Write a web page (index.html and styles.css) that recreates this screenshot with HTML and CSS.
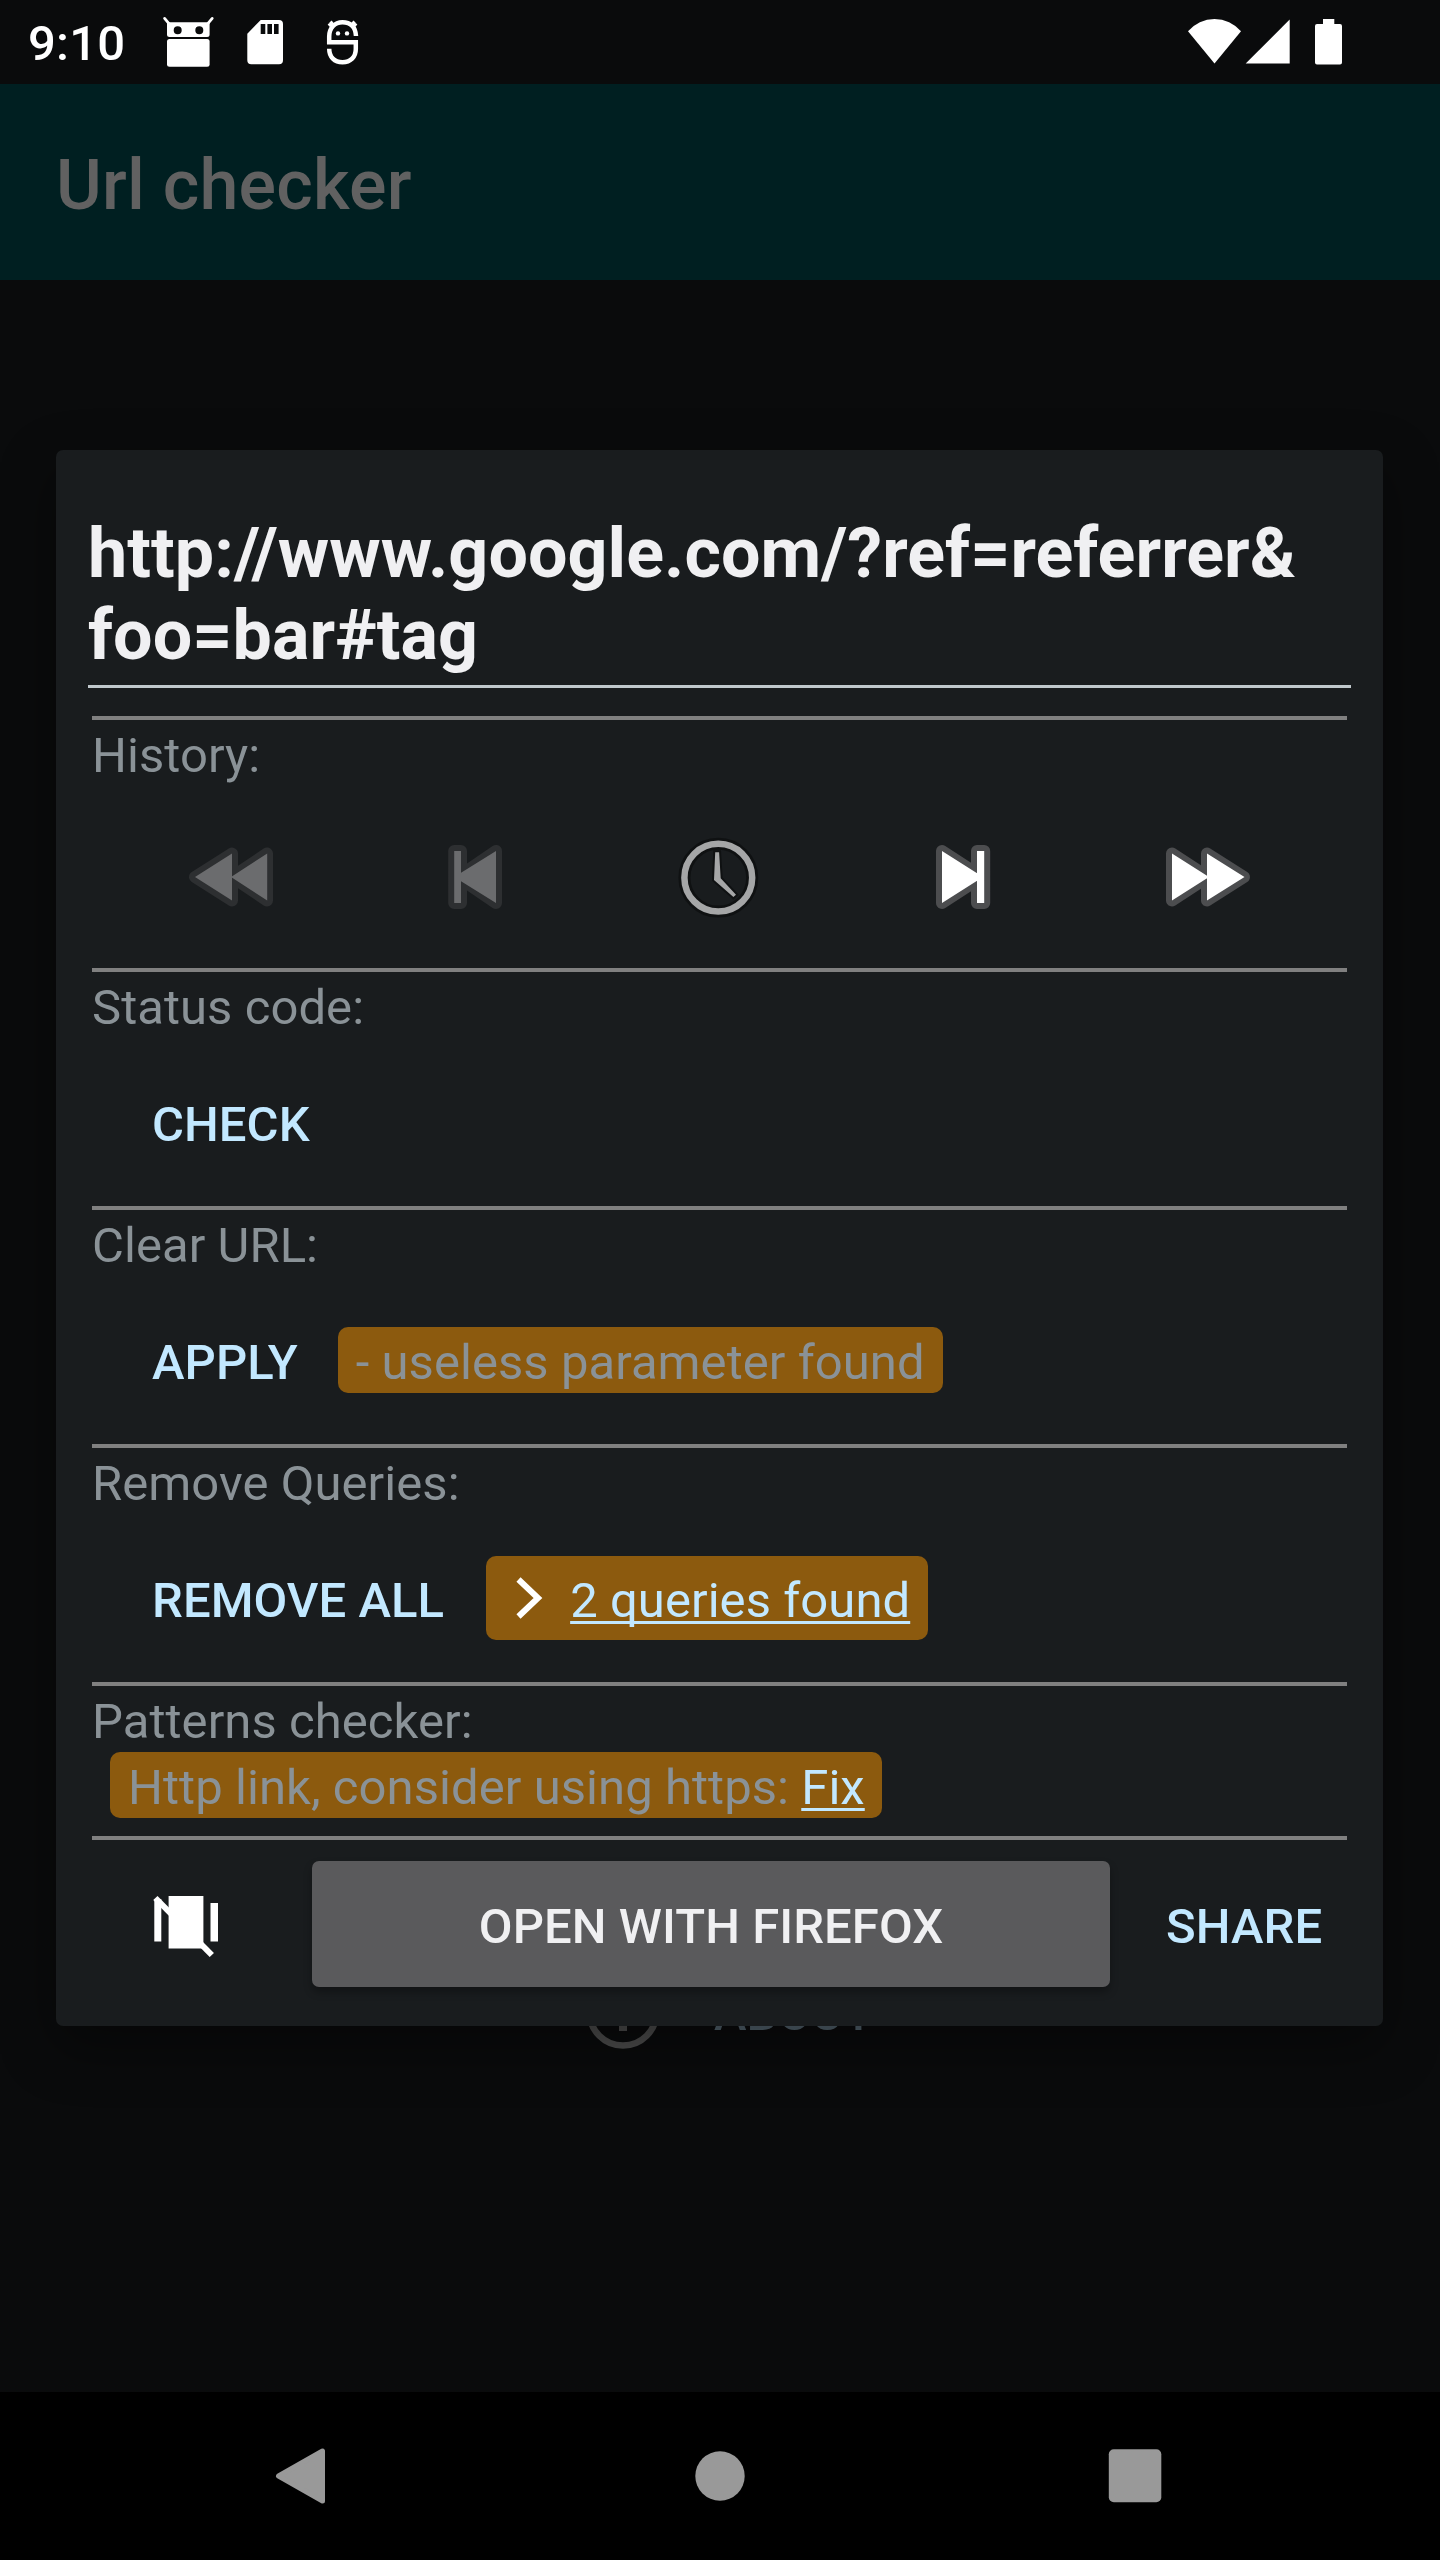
FILE: index.html
```html
<!DOCTYPE html>
<html lang="en">
<head>
<meta charset="utf-8">
<title>Url checker</title>
<link rel="stylesheet" href="styles.css">
</head>
<body>
<div class="screen">
  <header class="status-bar">
    <span class="clock">9:10</span>
    <svg class="notifications" viewBox="160 0 204 84" width="204" height="84">
      <g fill="#fff">
        <rect x="167" y="39" width="42.6" height="27.7" rx="2.5"/>
        <path fill-rule="evenodd" d="M167 22.3h42.6V34.500q0 2.500-2.500 2.500h-37.600q-2.500 0-2.500-2.500zM173.700 30.300a4 4 0 1 0 8 0a4 4 0 1 0-8 0zM195.300 30.300a4 4 0 1 0 8 0a4 4 0 1 0-8 0z"/>
        <path fill-rule="evenodd" d="M260.700 20H279q4 0 4 4V60.300q0 4-4 4H251.300q-4 0-4-4V33.700zM260.700 24v10h4.600V24zM267.400 24v10h4.600V24zM274 24v10h4.600V24z"/>
        <circle cx="338" cy="33.400" r="2.200"/><circle cx="347" cy="33.400" r="2.200"/>
      </g>
      <g fill="none" stroke="#fff">
        <path stroke-width="2.800" stroke-linecap="round" d="M164.600 18.400l5 6M212.200 18.400l-5 6"/>
        <path stroke-width="4.500" d="M356 36C355.600 27 350.500 22.200 342.500 22.200S329.200 28 329.200 36.500V42.200H355.800V49C355.800 57 350.500 62.200 342.500 62.200S329.200 57 329.200 48.700"/>
        <path stroke-width="3" d="M328.500 25.500l4.500-3M330.500 21.500l3 4M356.500 25.500l-4.500-3M354.500 21.500l-3 4"/>
      </g>
    </svg>
    <svg class="system" viewBox="1184 0 162 84" width="162" height="84" fill="#fff">
      <path d="M1188 31.300A34.700 34.700 0 0 1 1241 31.300L1214.500 63.400z"/>
      <path d="M1245.700 63.600H1289.700V19.600z"/>
      <path d="M1323 19h11.300v5H1340q2 0 2 2V62.500q0 2-2 2h-23q-2 0-2-2V26q0-2 2-2h6z"/>
    </svg>
  </header>
  <div class="app-bar">Url checker</div>
  <main class="page">
    <div class="about">
      <svg viewBox="583 1972 80 80" width="80" height="80" fill="none" stroke="#4c4c4c">
        <circle cx="623" cy="2012" r="33.500" stroke-width="6.500"/>
        <path stroke-width="8" d="M623 2005v26M623 1992v8"/>
      </svg>
      <span class="line">ABOUT</span>
    </div>
  </main>
  <nav class="nav-bar">
    <svg viewBox="260 2436 80 80" width="80" height="80"><path d="M278.500 2476L322.500 2451V2501z" fill="#999" stroke="#999" stroke-width="5" stroke-linejoin="round"/></svg>
    <svg viewBox="680 2436 80 80" width="80" height="80"><circle cx="720" cy="2476" r="24.700" fill="#999"/></svg>
    <svg viewBox="1100 2436 80 80" width="80" height="80"><rect x="1108.800" y="2449.300" width="52.500" height="53" rx="5" fill="#999"/></svg>
  </nav>

  <section class="dialog">
    <div class="url">http://www.google.com/?ref=referrer&amp;<br>foo=bar#tag</div>
    <div class="module">
      <div class="line label">History:</div>
      <div class="history">
        <svg viewBox="176 821 112 112" width="112" height="112">
          <path d="M195 877L232 853.500V900.500zM232 877L267 853.500V900.500z" fill="#2d2f31" stroke="#2d2f31" stroke-width="12" stroke-linejoin="round"/>
          <path d="M195 877L232 853.500V900.500zM231 877L267.200 853.500V900.500z" fill="#6b6c6e"/>
        </svg>
        <svg viewBox="420 821 112 112" width="112" height="112">
          <path d="M454.200 851h6.800v52h-6.800zM458 877L496 851V903z" fill="#2d2f31" stroke="#2d2f31" stroke-width="12" stroke-linejoin="round"/>
          <path d="M454.200 851h6.800v52h-6.800zM454.200 877L496 851V903z" fill="#6b6c6e"/>
        </svg>
        <svg viewBox="664 821 112 112" width="112" height="112">
          <circle cx="718.300" cy="877.700" r="33.900" fill="none" stroke="#0f1112" stroke-width="12"/>
          <path d="M715.200 852.300h3.900L720.700 878.300L736 894.700L733.400 897L714 880z" fill="#a5a6a7" stroke="#0f1112" stroke-width="4" paint-order="stroke"/>
          <circle cx="718.300" cy="877.700" r="33.900" fill="none" stroke="#a5a6a7" stroke-width="6.500"/>
        </svg>
        <svg viewBox="908 821 112 112" width="112" height="112">
          <path d="M942 851L982 877L942 903zM977 851h7.200v52h-7.200z" fill="#4c4d4f" stroke="#4c4d4f" stroke-width="12" stroke-linejoin="round"/>
          <path d="M942 851L983 877L942 903zM977 851h7.200v52h-7.200z" fill="#fff"/>
        </svg>
        <svg viewBox="1152 821 112 112" width="112" height="112">
          <path d="M1172 853.500L1208 877L1172 900.500zM1207 853.500L1244 877L1207 900.500z" fill="#4c4d4f" stroke="#4c4d4f" stroke-width="12" stroke-linejoin="round"/>
          <path d="M1172 853.500L1209 877L1172 900.500zM1207 853.500L1244.500 877L1207 900.500z" fill="#fff"/>
        </svg>
      </div>
    </div>
    <div class="module">
      <div class="line label">Status code:</div>
      <div class="actions"><span class="line button">CHECK</span></div>
    </div>
    <div class="module">
      <div class="line label">Clear URL:</div>
      <div class="actions"><span class="line button apply">APPLY</span><span class="line badge">- useless parameter found</span></div>
    </div>
    <div class="module">
      <div class="line label">Remove Queries:</div>
      <div class="actions">
        <span class="line button">REMOVE ALL</span>
        <span class="badge expand">
          <svg viewBox="512 1572 34 52" width="34" height="52"><path d="M518.500 1579.500L538 1598L518.500 1616.500" fill="none" stroke="#fff" stroke-width="6"/></svg>
          <span class="line link">2 queries found</span>
        </span>
      </div>
    </div>
    <div class="module patterns">
      <div class="line label">Patterns checker:</div>
      <span class="line badge">Http link, consider using https: <span class="link">Fix</span></span>
    </div>
    <div class="module footer">
      <svg viewBox="148 1884 80 80" width="80" height="80" fill="#fff">
        <path d="M154.300 1899h7v42.600h-7zM168.600 1896h34.800v52.400h-34.800zM210.500 1903h7.500v38.600h-7.500z"/>
        <path d="M155.400 1898L211.800 1955" stroke="#fff" stroke-width="6"/>
      </svg>
      <div class="open"><span class="line">OPEN WITH FIREFOX</span></div>
      <span class="line share">SHARE</span>
    </div>
  </section>
</div>
</body>
</html>
```
FILE: styles.css
```css
* { box-sizing: border-box; }
body {
  margin: 0;
  background: #0a0b0c;
  font-family: Roboto, "Liberation Sans", sans-serif;
  font-size: 49px;
  letter-spacing: 0.06px;
  color: #8a9297;
}
svg { display: block; flex: none; }
.screen {
  position: relative;
  width: 1440px;
  height: 2560px;
  display: flex;
  flex-direction: column;
  overflow: hidden;
}

.line { height: 66px; line-height: 71px; white-space: nowrap; }

.status-bar { height: 84px; display: flex; align-items: center; padding-left: 28px; color: #fff; }
.clock { width: 132px; line-height: 84px; padding-top: 4px; font-weight: 500; letter-spacing: 0.2px; }
.system { margin-left: 820px; }

.app-bar {
  height: 196px;
  padding: 3px 0 0 56px;
  background: #001f21;
  color: #616161;
  font-size: 70px;
  font-weight: 500;
  letter-spacing: 0.22px;
  line-height: 196px;
}

.page { flex: 1; padding-top: 1692px; }
.about { display: flex; align-items: center; gap: 51px; padding-left: 583px; color: #52626d; font-weight: 500; }
.about .line { margin-top: -2px; }

.nav-bar {
  height: 168px;
  background: #000;
  display: flex;
  align-items: center;
  justify-content: space-between;
  padding: 0 260px;
}

.dialog {
  position: absolute;
  left: 56px;
  top: 450px;
  width: 1327px;
  height: 1576px;
  padding: 62px 36px 0;
  background: #191c1e;
  border-radius: 7px;
  box-shadow: 0 20px 56px rgba(0, 0, 0, 0.4);
}
.url {
  height: 176px;
  margin: 0 -4px 28px;
  border-bottom: 3px solid #c0c8cc;
  color: #f0f0f2;
  font-size: 70px;
  font-weight: 700;
  line-height: 82px;
}

.module { height: 238px; border-top: 4px solid #808080; }
.module:nth-of-type(2) { height: 252px; }
.history {
  height: 182px;
  display: grid;
  grid-template-columns: repeat(5, 244px);
  justify-content: center;
  justify-items: center;
  align-items: center;
}
.actions { height: 168px; display: flex; align-items: center; padding-left: 60px; }
.button, .share { color: #c2e8ff; font-weight: 500; }
.button { margin-right: 42px; }
.apply { margin-right: 40px; }
.badge { padding: 0 18px; border-radius: 10px; background: #8c5a0e; }
.expand { height: 84px; display: flex; align-items: center; padding-left: 26px; gap: 24px; }
.link {
  color: #c2e8ff;
  text-decoration: underline;
  text-decoration-thickness: 3px;
  text-underline-offset: 4px;
  text-decoration-skip-ink: none;
}

.patterns { height: 154px; }
.patterns > .badge { display: block; width: 772px; margin-left: 18px; }

.footer { height: 190px; display: flex; align-items: flex-start; padding-top: 21px; }
.footer svg { margin: 23px 84px 0 56px; }
.open {
  width: 798px;
  height: 126px;
  display: flex;
  align-items: center;
  justify-content: center;
  border-radius: 7px;
  background: #5a5a5c;
  color: #f0f0f2;
  font-weight: 500;
  box-shadow: 0 5px 8px rgba(0, 0, 0, 0.3);
}
.share { margin: 30px 0 0 56px; }
```
